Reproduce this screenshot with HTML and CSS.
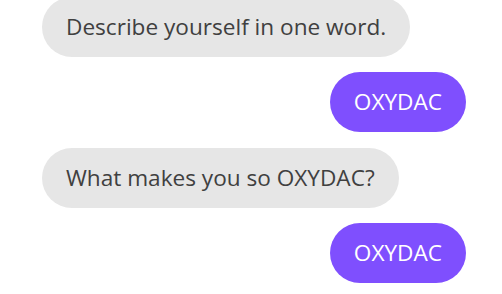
FILE: index.html
```html
<!DOCTYPE html>
<html>
<head>
<meta charset="utf-8">
<link rel="stylesheet" href="styles.css">
</head>
<body>
<div class="chat">
  <div class="msg them">Describe yourself in one word.</div>
  <div class="msg me">OXYDAC</div>
  <div class="msg them">What makes you so OXYDAC?</div>
  <div class="msg me">OXYDAC</div>
</div>
</body>
</html>
```
FILE: styles.css
```css
html, body {
  margin: 0;
  padding: 0;
  background: #ffffff;
}
body {
  font-family: "Open Sans", sans-serif;
  overflow: hidden;
}
.chat {
  display: flex;
  flex-direction: column;
  gap: 15.3px;
  padding: 0 36px 0 42px;
  margin-top: -3px;
}
.msg {
  font-size: 22.6px;
  line-height: 30px;
  padding: 15px 24px;
  border-radius: 30px;
  max-width: max-content;
}
.them {
  align-self: flex-start;
  background: #e6e6e6;
  color: #404040;
}
.me {
  align-self: flex-end;
  background: #7f4ffe;
  color: #ffffff;
}
```
